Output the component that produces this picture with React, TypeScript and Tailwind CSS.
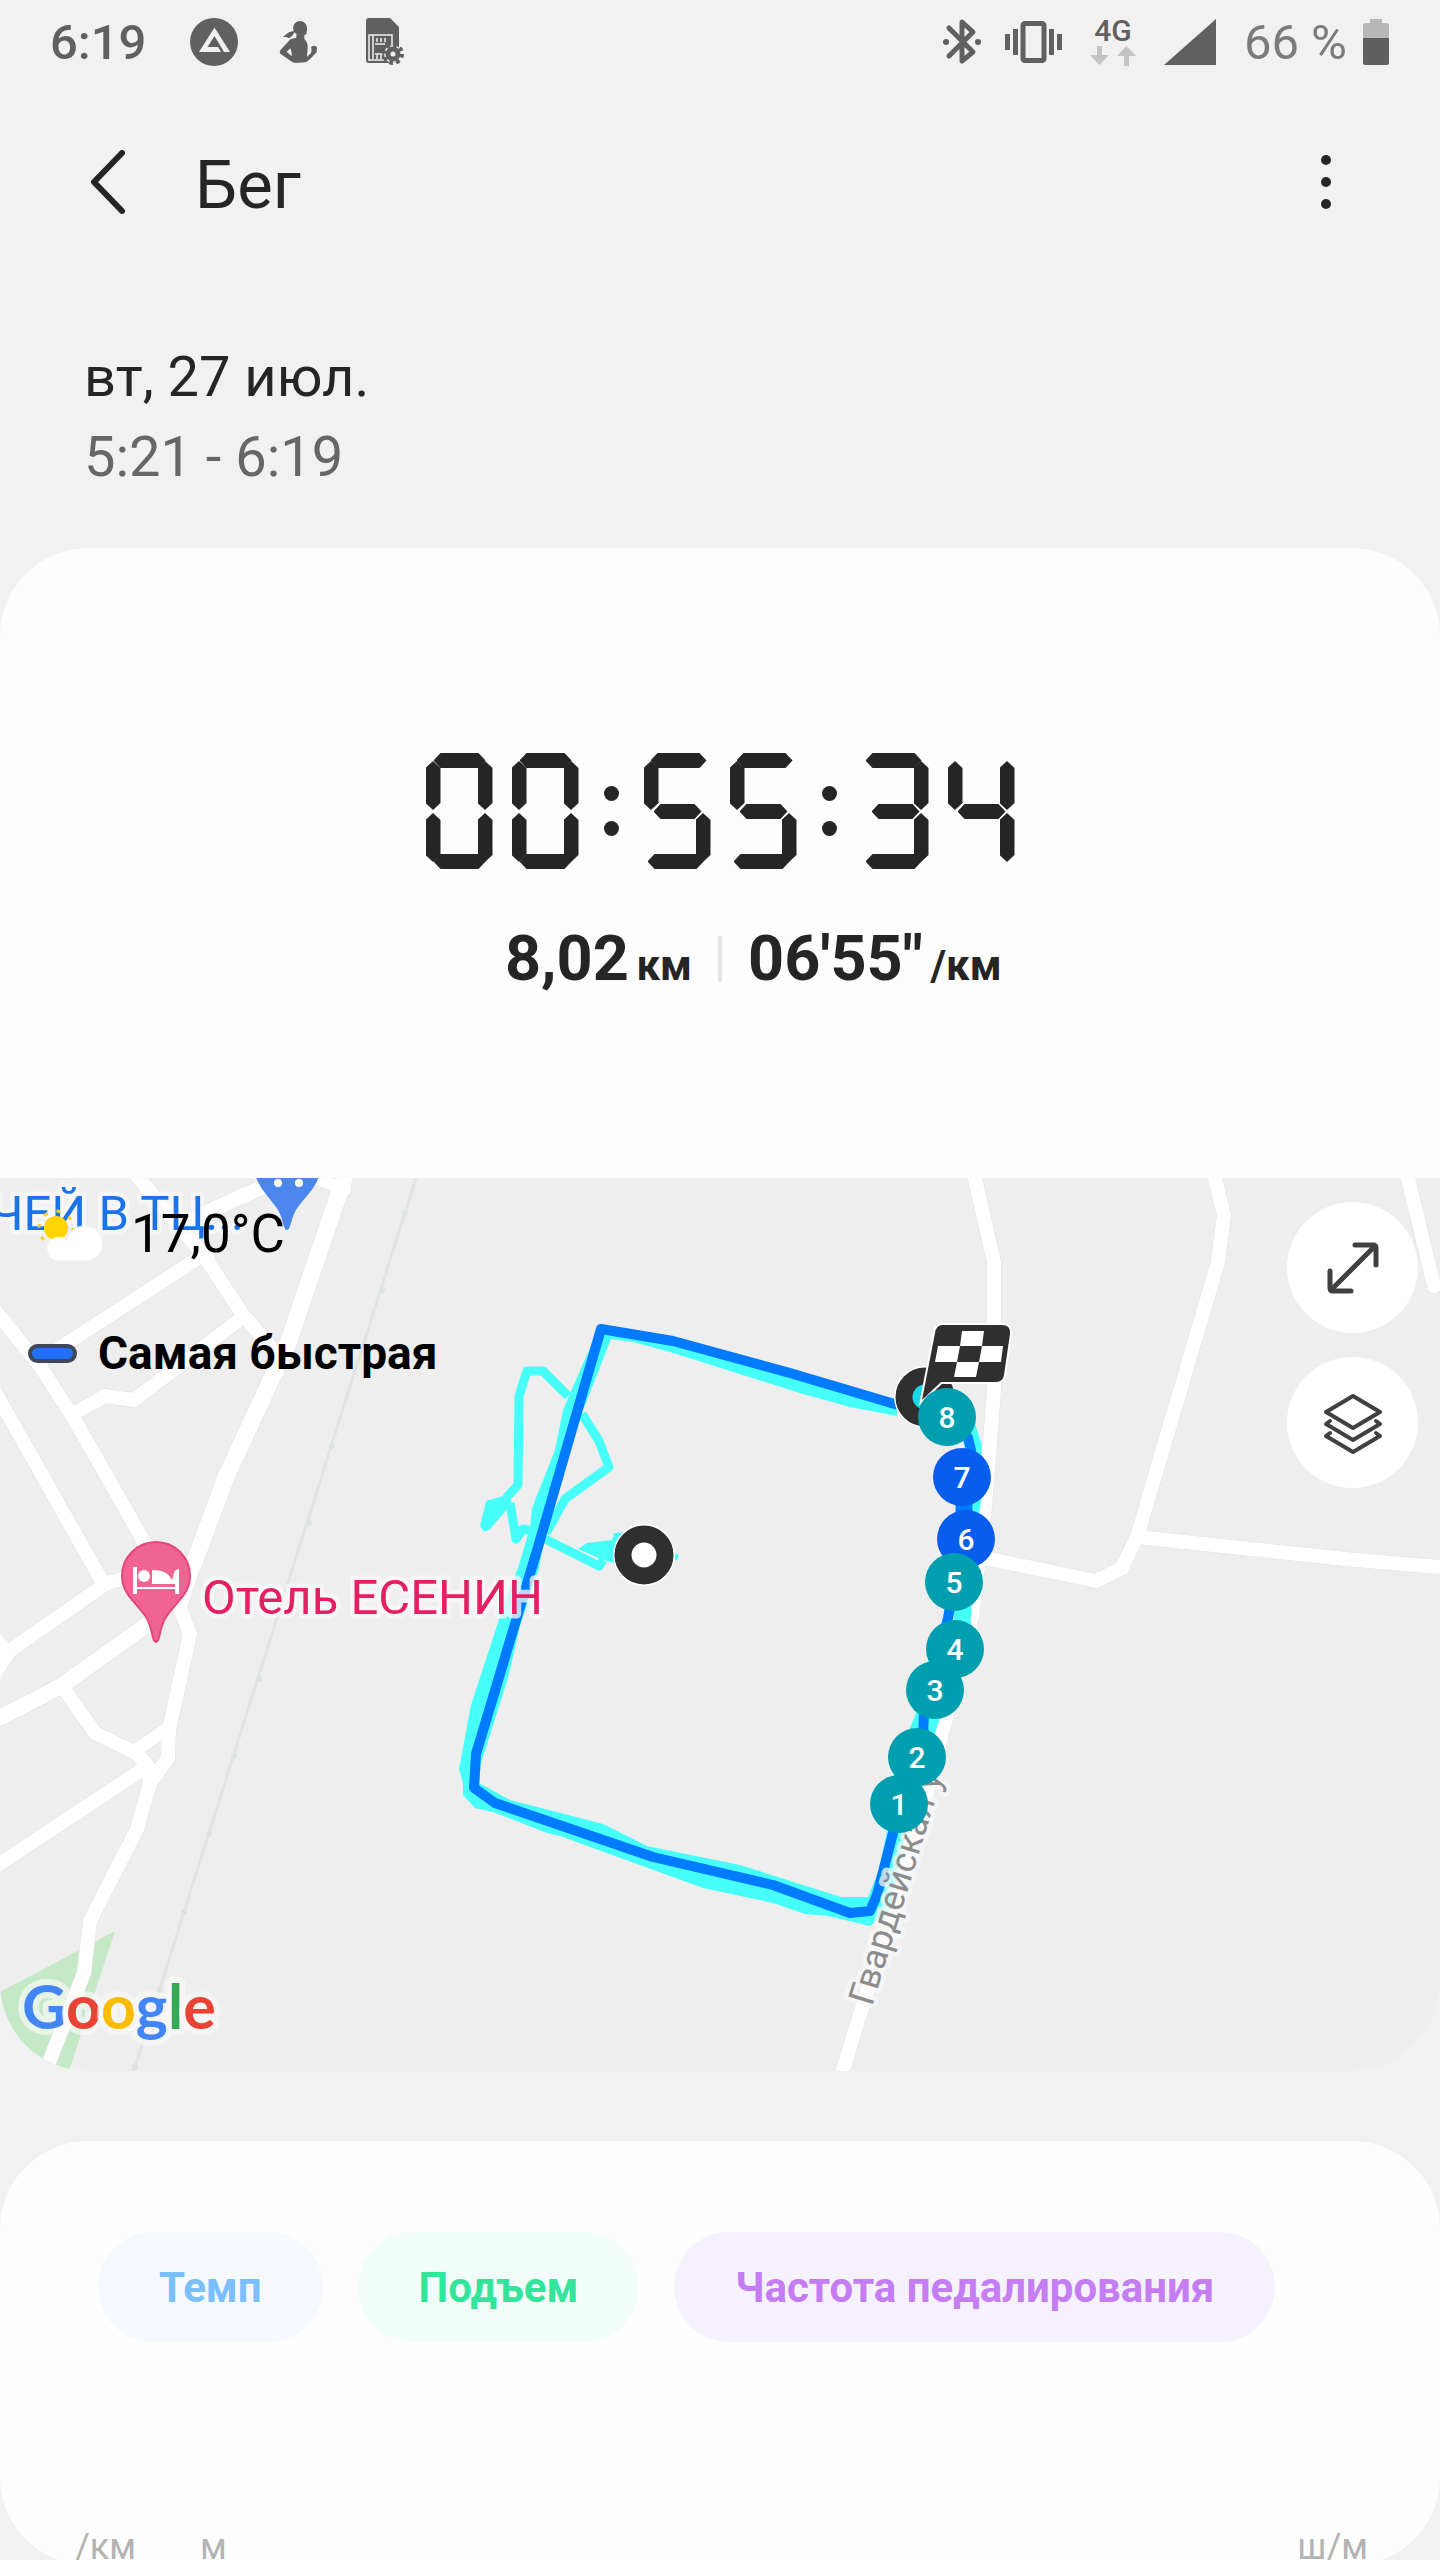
import type { ReactNode } from "react"

type Marker = {
	km: number
	x: number
	y: number
	fast?: boolean
}

// drawn in this order, the later ones lie on top
const markers: Marker[] = [
	{ km: 8, x: 947, y: 1417 },
	{ km: 7, x: 962, y: 1477, fast: true },
	{ km: 6, x: 966, y: 1539, fast: true },
	{ km: 5, x: 954, y: 1582 },
	{ km: 4, x: 955, y: 1649 },
	{ km: 3, x: 935, y: 1690 },
	{ km: 2, x: 917, y: 1757 },
	{ km: 1, x: 899, y: 1804 },
]

const roads = [
	{ width: 17, d: "M347 1170L288 1343L226 1477L194 1563" },
	{ width: 14, d: "M194 1563L180 1608L190 1634L169 1730L168 1758L150 1783L137 1829L90 1921L84 1973L44 2075" },
	{ width: 14, d: "M132 1170L205 1257L243 1315L278 1355" },
	{ width: 14, d: "M208 1257H200L38 1362" },
	{ width: 14, d: "M-6 1309L40 1366L73 1417L143 1540L180 1608" },
	{ width: 14, d: "M243 1317L134 1400L105 1396L73 1414" },
	{ width: 14, d: "M-6 1390L103 1583" },
	{ width: 14, d: "M130 1577L107 1583L8 1652L-8 1676" },
	{ width: 16, d: "M155 1619L61 1686L-8 1722" },
	{ width: 14, d: "M64 1689L95 1733L136 1753L148 1766L150 1783" },
	{ width: 13, d: "M168 1728L136 1750" },
	{ width: 14, d: "M143 1769L-8 1869" },
	{ width: 15, d: "M185 1222L265 1186" },
	{ width: 12, d: "M310 1176L345 1190" },
	{ width: 14, d: "M973 1170L994 1262V1390L985 1507L972 1618L925 1800L840 2080" },
	{ width: 14, d: "M1213 1170L1224 1215L1218 1262L1137 1537L1122 1568L1096 1581L980 1557" },
	{ width: 14, d: "M1137 1537L1345 1559L1450 1568" },
	{ width: 14, d: "M1406 1170L1434 1286" },
]

const railway = [
	[405, 1213],
	[382, 1290],
	[332, 1446],
	[309, 1523],
	[259, 1679],
	[234, 1756],
	[209, 1834],
	[184, 1912],
	[160, 1990],
	[135, 2067],
]

const chips = [
	{ label: "Темп", className: "bg-[#f5f9fd] text-[#7abffe]" },
	{ label: "Подъем", className: "bg-[#f2fdf9] text-[#33e49b]" },
	{ label: "Частота педалирования", className: "bg-[#f5f1fd] text-[#c47df3]" },
]

// a-g are the usual segments, A/T/D are longer bars with an open end
const segmentStyles: Record<string, string> = {
	a: "left-[8px] top-0 h-[15px] w-[52px]",
	A: "left-[7px] top-0 h-[15px] w-[56px]",
	T: "left-[4px] top-0 h-[15px] w-[56px]",
	b: "left-[52px] top-[8px] h-[49px] w-[15px]",
	c: "left-[52px] top-[60px] h-[49px] w-[15px]",
	d: "left-[8px] top-[101px] h-[15px] w-[52px]",
	D: "left-[4px] top-[101px] h-[15px] w-[56px]",
	e: "left-0 top-[60px] h-[49px] w-[15px]",
	f: "left-0 top-[8px] h-[49px] w-[15px]",
	g: "left-[10px] top-[51px] h-[15px] w-[48px]",
}

const horizontalClip =
	"[clip-path:polygon(0_50%,7px_0,calc(100%-7px)_0,100%_50%,calc(100%-7px)_100%,7px_100%)]"
const verticalClip =
	"[clip-path:polygon(50%_0,100%_7px,100%_calc(100%-7px),50%_100%,0_calc(100%-7px),0_7px)]"

const litSegments: Record<string, string> = {
	"0": "abcdef",
	"1": "bc",
	"2": "Tbged",
	"3": "TbgcD",
	"4": "fgbc",
	"5": "AfgcD",
	"6": "Afgecd",
	"7": "Tbc",
	"8": "abcdefg",
	"9": "abcDfg",
}

function Digit({ value }: { value: string }) {
	return (
		<span className="relative block h-[116px] w-[67px]">
			{litSegments[value].split("").map((segment) => (
				<span
					key={segment}
					className={`absolute bg-[#252525] ${segmentStyles[segment]} ${
						"aATdDg".includes(segment) ? horizontalClip : verticalClip
					}`}
				/>
			))}
		</span>
	)
}

function Duration({ value }: { value: string }) {
	return (
		<time className="flex items-center justify-center gap-[25px]">
			<span className="sr-only">{value}</span>
			{value.split(/(:)/).map((part, i) =>
				part === ":" ? (
					<span key={i} className="flex flex-col gap-5" aria-hidden="true">
						<span className="size-[15px] rounded-full bg-[#252525]" />
						<span className="size-[15px] rounded-full bg-[#252525]" />
					</span>
				) : (
					<span key={i} className="flex gap-[19px]" aria-hidden="true">
						{part.split("").map((digit, j) => (
							<Digit key={j} value={digit} />
						))}
					</span>
				)
			)}
		</time>
	)
}

function StatusBar() {
	return (
		<div className="flex h-[84px] items-center justify-between pl-[50px] pr-[51px] text-[49px] font-medium leading-none text-[#606060]">
			<div className="flex items-center gap-9">
				<span className="mr-2">6:19</span>
				<svg className="size-12" viewBox="0 0 48 48" fill="none">
					<circle cx="24" cy="24" r="24" fill="#606060" />
					<path d="M24.500 9.500L40 34H34L24.500 18L17.500 29H28L31 34H9Z" fill="#f1f1f1" />
				</svg>
				<svg className="h-[42px] w-12" viewBox="-15 0 144 126" fill="#606060">
					<circle cx="63" cy="21" r="21" />
					<path d="M70 18L84 24L82 40L70 44Z" />
					<path d="M48 30C32 31 22 37 12 49C22 47 26 50 30 52C38 48 44 40 48 30Z" />
					<path
						fillRule="evenodd"
						d="M52 40H76V54C84 62 87 70 86 82L84 108L96 96C98 90 98 84 96 78L102 75Q112 72 114 80L113 94C104 102 94 116 82 123Q72 126 46 125Q38 124 32 118L4 98Q0 94 4 88L34 55Q42 52 52 50ZM23 92L38 106Q40 94 34 82Z"
					/>
				</svg>
				<svg className="ml-2 h-12 w-[42px]" viewBox="0 0 42 48" fill="none">
					<path d="M3 0H24L33 9V45H3Q0 45 0 42V3Q0 0 3 0Z" fill="#606060" />
					<path
						d="M3 43V17H26V27M7 17V41M11 20V24M15 20V24M19 20V24M9 26H19M9 36H17M11 37V41M15 37V41M3 42H18"
						stroke="#f1f1f1"
						strokeWidth="1.500"
					/>
					<circle cx="27" cy="36" r="9" fill="#f1f1f1" />
					<circle cx="27" cy="36" r="9" stroke="#606060" strokeWidth="4" strokeDasharray="3.600 3.470" />
					<circle cx="27" cy="36" r="5" stroke="#606060" strokeWidth="5" />
				</svg>
			</div>
			<div className="flex items-center">
				<svg className="h-[46px] w-[38px]" viewBox="0 0 38 46" fill="none" stroke="#606060" strokeWidth="5">
					<path d="M6 9L30 33L19 42V3L30 13L6 37" strokeLinecap="round" strokeLinejoin="round" />
					<path d="M3 23H3.100M35 23H35.100" strokeWidth="6" strokeLinecap="round" />
				</svg>
				<svg className="ml-6 h-[42px] w-[57px]" viewBox="0 0 57 42" fill="none">
					<rect x="18" y="2.500" width="21" height="37" rx="2" stroke="#606060" strokeWidth="5" />
					<path d="M0 13H5V29H0ZM8 8H13V34H8ZM44 8H49V34H44ZM52 13H57V29H52Z" fill="#606060" />
				</svg>
				<div className="ml-7 flex flex-col items-center gap-0.5">
					<span className="text-[30px] leading-[26px]">4G</span>
					<svg className="h-5 w-[46px]" viewBox="0 0 46 20" fill="#c4c4c4">
						<path d="M7 0H12V9H19L9.500 19L0 9H7ZM34 20H39V10H46L36.500 0L27 10H34Z" />
					</svg>
				</div>
				<svg className="ml-7 h-[46px] w-[52px]" viewBox="0 0 52 46" fill="#606060">
					<path d="M52 0V46H0Z" />
				</svg>
				<span className="ml-7 font-normal text-[#7b7b7b]">66 %</span>
				<svg className="ml-4 h-[46px] w-[26px]" viewBox="0 0 26 46">
					<path d="M7 0H19V4H24Q26 4 26 6V19H0V6Q0 4 2 4H7Z" fill="#b8b8b8" />
					<path d="M0 19H26V44Q26 46 24 46H2Q0 46 0 44Z" fill="#5f5f5f" />
				</svg>
			</div>
		</div>
	)
}

function MapButton({ label, children }: { label: string; children: ReactNode }) {
	return (
		<button
			type="button"
			aria-label={label}
			className="flex size-[131px] items-center justify-center rounded-full bg-white"
		>
			<svg
				className="size-16"
				viewBox="0 0 64 64"
				fill="none"
				stroke="#404040"
				strokeWidth="4"
				strokeLinecap="round"
				strokeLinejoin="round"
			>
				{children}
			</svg>
		</button>
	)
}

function RouteMap() {
	return (
		<svg className="block h-auto w-full" viewBox="0 1178 1440 893" fill="none" fontFamily="Roboto, sans-serif">
			<rect y="1178" width="1440" height="893" fill="#eeeeee" />
			<path d="M0 1992L115 1931L69 2071H0Z" fill="#c5e9c7" />

			{/* railway */}
			<path d="M416 1178L135 2067L133 2071" stroke="#e1e4e4" strokeWidth="3" />
			{railway.map(([x, y]) => (
				<circle key={y} cx={x} cy={y} r="3" fill="#dfe2e2" />
			))}

			{roads.map((road) => (
				<path key={road.d} d={road.d} stroke="#e2e2e2" strokeWidth={road.width + 1} strokeLinecap="round" />
			))}
			{roads.map((road) => (
				<path key={road.d} d={road.d} stroke="#ffffff" strokeWidth={road.width} strokeLinecap="round" />
			))}
			<path d="M0 1634L11 1646L15 1655L0 1678Z" fill="#ffffff" />

			{/* all laps */}
			<g fill="#45fff8">
				<path
					fillRule="evenodd"
					d="M599 1327L572 1389L563 1410L555 1450L532 1508L530 1528L518 1568L507 1595L471 1705L459 1769L463 1783V1795L475 1808L493 1812L547 1833L560 1836L703 1888L773 1903L805 1914L828 1916L870 1926L890 1910L905 1833L899 1800H893L885 1840L879 1870L868 1897H841L740 1865L647 1846L603 1824L510 1800L479 1783L481 1763L508 1678L520 1626L539 1568L545 1535L563 1472L578 1423L611 1339L633 1342L670 1352L803 1394L850 1407L897 1416V1400Z"
				/>
				<path d="M486 1501L503 1496L512 1501L508 1508L490 1529L484 1532L480 1526Z" />
				<path d="M578 1549L587 1543L612 1540L614 1533L625 1532L650 1535L640 1570L603 1560Z" />
				<path d="M670 1557L676 1553L679 1557L676 1560Z" />
			</g>
			<g stroke="#45fff8" strokeWidth="9" strokeLinejoin="round">
				<path d="M568 1396L543 1371H527L519 1396L518 1485L506 1498" />
				<path d="M510 1503L516 1539L523 1529L532 1531" />
				<path d="M582 1414L599 1441L609 1467L565 1499L546 1533" />
				<path d="M545 1539L599 1566L603 1560" />
				<path d="M965 1420L973 1445V1497L964 1560L962 1630L940 1690L924 1740L900 1805" strokeWidth="17" />
				<path d="M945 1640L923 1720L910 1750" strokeWidth="18" />
			</g>

			{/* fastest lap */}
			<path
				d="M898 1405L790 1373L673 1341L601 1329L538 1547L476 1754L474 1788L495 1803L653 1857L773 1885L850 1913L870 1911L877 1895L893 1833L899 1805L923 1740L924 1710L948 1618L964 1530V1490L971 1450L968 1438L955 1420"
				stroke="#007aff"
				strokeWidth="10"
				strokeLinejoin="round"
			/>
			<path d="M964 1480V1530" stroke="#007aff" strokeWidth="17" />

			<g stroke="#f8f8f8" strokeOpacity="0.750" strokeWidth="9" strokeLinejoin="round" paintOrder="stroke">
				<text x="244" y="1230" textAnchor="end" fontSize="49" fill="#1a73e8">
					ЧЕЙ В ТЦ...
				</text>
				<text x="202" y="1614" fontSize="49" fill="#e61e62">
					Отель ЕСЕНИН
				</text>
				<text transform="translate(872 2007) rotate(-73)" fontSize="36" fill="#8c8c8c">
					Гвардейская у
				</text>
			</g>

			{/* shop pin */}
			<path d="M287 1230C283 1230 283 1216 276 1207C266 1193 254 1184 254 1164H321C321 1184 308 1193 298 1207C291 1216 291 1230 287 1230Z" fill="#4b87ee" />
			<circle cx="278" cy="1183" r="4" fill="#ffffff" />
			<circle cx="299" cy="1183" r="4" fill="#ffffff" />

			{/* hotel pin */}
			<path
				d="M156 1642C152 1642 153 1628 146 1617C136 1602 122 1594 122 1576A34 34 0 0 1 190 1576C190 1594 176 1602 166 1617C159 1628 160 1642 156 1642Z"
				fill="#f06493"
				stroke="#e5457b"
				strokeWidth="2"
			/>
			<g fill="#ffffff">
				<path d="M133 1567H137V1587H175V1572Q175 1569 179 1569V1594H175V1589H137V1594H133Z" />
				<circle cx="144" cy="1576" r="6" />
				<path d="M152 1570C161 1570 168 1572 172 1580L175 1570V1584H152Z" />
			</g>

			{/* start and finish */}
			<circle cx="925" cy="1397" r="31" fill="#ffffff" />
			<circle cx="925" cy="1397" r="21" fill="#15d8e8" stroke="#2f2f2f" strokeWidth="17" />
			<circle cx="644" cy="1555" r="31" fill="#ffffff" />
			<circle cx="644" cy="1555" r="21" fill="#ffffff" stroke="#2f2f2f" strokeWidth="17" />
			<path
				d="M943 1325H1002Q1011 1325 1010 1334L1004 1375Q1003 1382 996 1382H941L922 1400L935 1333Q936 1325 943 1325Z"
				fill="#2f2f2f"
				stroke="#ffffff"
				strokeWidth="4"
				paintOrder="stroke"
			/>
			<path
				d="M962 1331H984L982 1346H960ZM938 1346H960L957 1362H935ZM982 1346H1003L1001 1362H979ZM957 1362H979L976 1377H954Z"
				fill="#ffffff"
			/>

			{markers.map(({ km, x, y, fast }) => (
				<g key={km}>
					<circle cx={x} cy={y} r="29" fill={fast ? "#075eee" : "#009fb0"} />
					<text x={x} y={y + 11} textAnchor="middle" fontSize="30" fontWeight="500" fill="#ffffff">
						{km}
					</text>
				</g>
			))}

			<text
				x="22"
				y="2029"
				fontFamily="Lato, sans-serif"
				fontSize="61"
				fontWeight="700"
				stroke="#f8f8f8"
				strokeOpacity="0.700"
				strokeWidth="12"
				strokeLinejoin="round"
				paintOrder="stroke"
			>
				<tspan fill="#4285f4">G</tspan>
				<tspan fill="#ea4335">o</tspan>
				<tspan fill="#fbbc05">o</tspan>
				<tspan fill="#4285f4">g</tspan>
				<tspan fill="#34a853">l</tspan>
				<tspan fill="#ea4335">e</tspan>
			</text>
		</svg>
	)
}

export default function App() {
	return (
		<main className="h-screen overflow-hidden bg-[#f1f1f1] font-[Roboto,sans-serif] text-[#252525]">
			<StatusBar />

			<header className="flex h-[196px] items-center pl-[78px] pr-20">
				<button type="button" aria-label="Назад" className="flex h-20 w-[60px] items-center justify-center">
					<svg className="h-16 w-9" viewBox="0 0 36 64" fill="none" stroke="#252525" strokeWidth="6">
						<path d="M32 3L4 32L32 61" strokeLinecap="round" strokeLinejoin="round" />
					</svg>
				</button>
				<h1 className="ml-[57px] flex-1 pt-1.5 text-[67px] leading-none">Бег</h1>
				<button type="button" aria-label="Ещё" className="flex h-20 w-[68px] flex-col items-center justify-center gap-3">
					<span className="size-2.5 rounded-full bg-[#252525]" />
					<span className="size-2.5 rounded-full bg-[#252525]" />
					<span className="size-2.5 rounded-full bg-[#252525]" />
				</button>
			</header>

			<div className="px-[84px] pb-[51px] pt-[57px] text-[56px] leading-[80px]">
				<p>вт, 27 июл.</p>
				<p className="text-[#666666]">5:21 - 6:19</p>
			</div>

			<section className="overflow-hidden rounded-[88px] bg-[#fdfdfd]">
				<div className="pb-[181px] pt-[205px]">
					<Duration value="00:55:34" />
					<div className="mt-[52px] flex items-center font-bold leading-[76px]">
						<p className="flex-1 pr-[26px] text-right text-[63px]">
							8,02 <span className="-ml-2 text-[42px] leading-none">км</span>
						</p>
						<div className="h-[46px] w-1 bg-[#e6e6e6]" />
						<p className="flex-1 pl-[26px] text-[63px]">
							06'55" <span className="-ml-2 text-[42px] leading-none">/км</span>
						</p>
					</div>
				</div>

				<div className="relative">
					<RouteMap />
					<div className="absolute left-7 top-[26px] flex flex-col gap-[63px] text-black">
						<div className="flex items-center gap-[27px] text-[53px] leading-[60px]">
							<svg className="h-14 w-[76px]" viewBox="0 0 76 56">
								<circle cx="28" cy="22" r="17" fill="none" stroke="#f5cf3a" strokeWidth="3" strokeDasharray="4 9.350" />
								<circle cx="28" cy="22" r="12" fill="#ffd400" />
								<path
									d="M31 55A12 12 0 0 1 31 31Q36 31 39 34A18 18 0 1 1 62 55Z"
									fill="#ffffff"
									stroke="#f2f2f2"
								/>
							</svg>
							<span>17,0°C</span>
						</div>
						<div className="flex items-center gap-[21px] text-[46px] font-bold leading-[52px]">
							<span className="h-[19px] w-[49px] rounded-full border-4 border-[#3f4654] bg-[#2070fa]" />
							<span>Самая быстрая</span>
						</div>
					</div>
					<div className="absolute right-[22px] top-6 flex flex-col gap-6">
						<MapButton label="Развернуть карту">
							<path d="M10 54L54 10M34 9H52Q55 9 55 12V29M9 35V52Q9 55 12 55H30" strokeWidth="5" />
						</MapButton>
						<MapButton label="Слои карты">
							<path d="M32 5L59 21L32 37L5 21Z" />
							<path d="M9 30L5 33L32 49L59 33L55 30" />
							<path d="M9 42L5 45L32 61L59 45L55 42" />
						</MapButton>
					</div>
				</div>
			</section>

			<section className="mt-[70px] rounded-[88px] bg-[#fdfdfd] pt-[91px]">
				<div className="flex gap-[35px] px-[98px]">
					{chips.map((chip) => (
						<button
							key={chip.label}
							type="button"
							className={`h-[110px] rounded-full px-[61px] text-[42px] font-bold ${chip.className}`}
						>
							{chip.label}
						</button>
					))}
				</div>
				<div className="mt-[187px] flex pl-[75px] pr-[72px] text-[36px] leading-9 text-[#b3b3b3]">
					<span className="w-[125px]">/км</span>
					<span className="flex-1">м</span>
					<span>ш/м</span>
				</div>
			</section>
		</main>
	)
}
